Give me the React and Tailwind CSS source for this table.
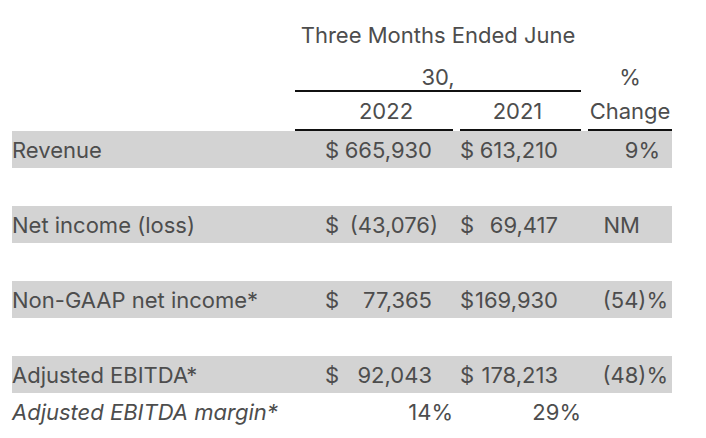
import React from 'react';

// Données du tableau (trimestre clos le 30 juin)
const rows = [
    { label: 'Revenue', a: { sign: '$', value: '665,930' }, b: { sign: '$', value: '613,210' }, change: '9%', changePad: 'pr-[12px]' },
    { label: 'Net income (loss)', a: { sign: '$', value: '(43,076)', paren: true }, b: { sign: '$', value: '69,417' }, change: 'NM', changePad: 'pr-[32px]' },
    { label: 'Non-GAAP net income*', a: { sign: '$', value: '77,365' }, b: { sign: '$', value: '169,930' }, change: '(54)%', changePad: 'pr-[4px]' },
    { label: 'Adjusted EBITDA*', a: { sign: '$', value: '92,043' }, b: { sign: '$', value: '178,213' }, change: '(48)%', changePad: 'pr-[4px]' },
];

const grid = 'grid grid-cols-[276px_158px_121px_84px] gap-x-[7px]';

const Money = ({ cell, padL, padR }) => (
    <div className={`flex justify-between ${padL} ${padR}`}>
        <span>{cell.sign}</span>
        <span className={cell.paren ? 'mr-[-6px]' : ''}>{cell.value}</span>
    </div>
);

export default function App() {
    return (
        <div className="min-h-screen bg-white pt-[16px] pl-[12px] text-[22px] leading-[26px] text-[#4d4d4d]" style={{ fontFamily: 'Inter, "Liberation Sans", sans-serif' }}>
            {/* En-tête */}
            <div className={`${grid} h-[38px] items-center`}>
                <div />
                <div className="col-span-2 text-center whitespace-nowrap">Three Months Ended June</div>
            </div>
            <div className={`${grid} h-[38px]`}>
                <div />
                <div className="col-span-2 flex items-center justify-center pt-[10px] border-b-2 border-[#111]">30,</div>
                <div className="flex items-center justify-center pt-[10px] pb-[2px]">%</div>
            </div>
            <div className={`${grid} h-[39px]`}>
                <div />
                <div className="flex items-center justify-center pl-[24px] border-b-2 border-[#111]">2022</div>
                <div className="flex items-center justify-center pr-[6px] border-b-2 border-[#111]">2021</div>
                <div className="flex items-center justify-center border-b-2 border-[#111]">Change</div>
            </div>

            {/* Lignes */}
            <div className="flex flex-col gap-[38px]">
                {rows.map((r) => (
                    <div key={r.label} className={`${grid} h-[37px] items-center bg-[#d3d3d3] w-[660px]`}>
                        <div className="whitespace-nowrap">{r.label}</div>
                        <Money cell={r.a} padL="pl-[30px]" padR="pr-[21px]" />
                        <Money cell={r.b} padL="pl-0" padR="pr-[23px]" />
                        <div className={`text-right ${r.changePad}`}>{r.change}</div>
                    </div>
                ))}
            </div>
            <div className={`${grid} h-[37px] items-center`}>
                <div className="italic whitespace-nowrap">Adjusted EBITDA margin*</div>
                <div className="text-right">14%</div>
                <div className="text-right">29%</div>
                <div />
            </div>
        </div>
    );
}
